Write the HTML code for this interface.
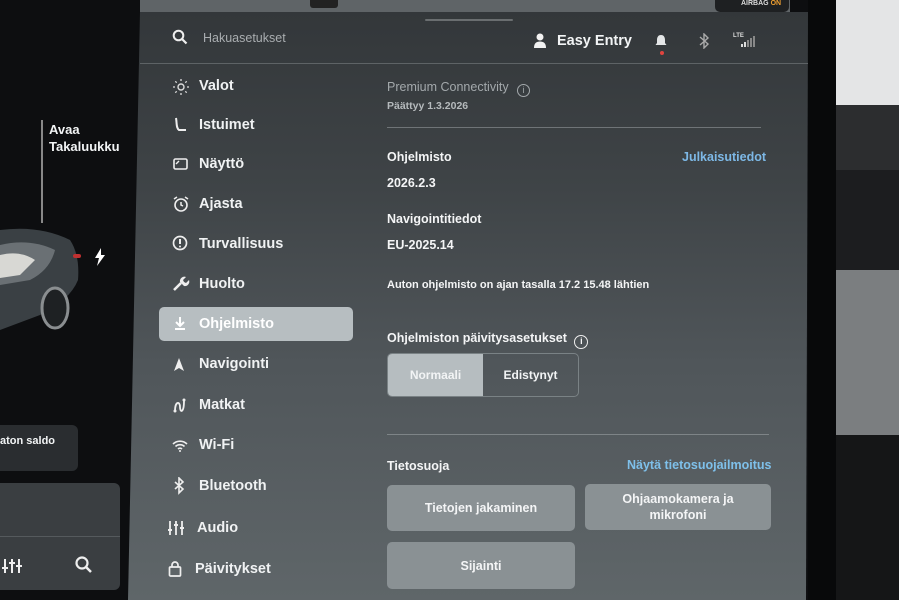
<!DOCTYPE html>
<html><head><meta charset="utf-8"><style>
*{margin:0;padding:0;box-sizing:border-box}
body{width:899px;height:600px;overflow:hidden;background:#0d0e10;font-family:"Liberation Sans",sans-serif;position:relative;color:#f2f4f5}
.a{position:absolute}
.b{font-weight:bold}
.panel{left:128px;top:12px;width:682px;height:588px;background:linear-gradient(180deg,#33373a 0%,#3f4447 30%,#50565a 60%,#5f6669 100%);clip-path:polygon(12px 0,680px 0,678px 100%,0 100%)}
.mi{position:absolute;left:199px;font-size:14.5px;font-weight:bold;color:#f0f2f3}
.ic{position:absolute;left:172px;width:18px;height:18px}
.t{position:absolute;left:387px;font-size:12.5px;font-weight:bold;color:#f4f5f6}
.btn{position:absolute;background:#8a9194;border-radius:5px;color:#f4f5f6;font-weight:bold;font-size:12.5px;display:flex;align-items:center;justify-content:center;text-align:center;line-height:16px}
</style></head><body>
<div class="a" style="left:833px;top:0;width:66px;height:105px;background:#e4e5e6"></div>
<div class="a" style="left:833px;top:105px;width:66px;height:65px;background:#2c2d2f"></div>
<div class="a" style="left:833px;top:170px;width:66px;height:100px;background:#1c1d1f"></div>
<div class="a" style="left:833px;top:270px;width:66px;height:165px;background:#7b7e80"></div>
<div class="a" style="left:833px;top:435px;width:66px;height:165px;background:#151617"></div>
<div class="a" style="left:808px;top:0;width:28px;height:600px;background:#08090a"></div>
<div class="a" style="left:140px;top:0;width:650px;height:12px;background:#5f6467"></div>
<div class="a" style="left:310px;top:0;width:28px;height:8px;background:#222;border-radius:0 0 3px 3px"></div>
<div class="a" style="left:715px;top:0;width:74px;height:12px;background:#1e2022;border-radius:0 0 5px 5px;font-size:7px;color:#ddd;padding-left:26px;font-weight:bold">AIRBAG <span style="color:#f0a030">ON</span></div>
<div class="a panel"></div>
<div class="a" style="left:140px;top:63px;width:668px;height:1px;background:#5e6366"></div>
<div class="a" style="left:425px;top:19px;width:88px;height:2px;background:#6a6e70;border-radius:1px"></div>
<svg class="a" style="left:172px;top:29px" width="16" height="16" viewBox="0 0 16 16"><circle cx="6.5" cy="6.5" r="4.8" fill="none" stroke="#eee" stroke-width="2"/><path d="M10 10l4.5 4.5" stroke="#eee" stroke-width="2.2"/></svg>
<div class="a" style="left:203px;top:31px;font-size:12.5px;color:#a9adb0">Hakuasetukset</div>
<svg class="a" style="left:533px;top:33px" width="14" height="15" viewBox="0 0 14 15"><circle cx="7" cy="4" r="3.5" fill="#f2f2f2"/><path d="M1 15c0-5 2.5-6.5 6-6.5s6 1.5 6 6.5z" fill="#f2f2f2"/></svg>
<div class="a b" style="left:557px;top:33px;font-size:14.5px">Easy Entry</div>
<svg class="a" style="left:655px;top:34px" width="12" height="14" viewBox="0 0 12 14"><path d="M6 1c-3 0-4 2.5-4 5v3l-1.5 2h11L10 9V6c0-2.5-1-5-4-5z" fill="#e4e6e7"/></svg>
<div class="a" style="left:660px;top:51px;width:4px;height:4px;border-radius:50%;background:#e0443e"></div>
<svg class="a" style="left:698px;top:33px" width="12" height="16" viewBox="0 0 12 16"><path d="M2 4l8 7-4 4V1l4 4-8 7" stroke="#aaa" stroke-width="1.4" fill="none"/></svg>
<div class="a" style="left:733px;top:33px;font-size:6px;color:#ddd;font-weight:bold">LTE</div>
<svg class="a" style="left:741px;top:36px" width="14" height="11" viewBox="0 0 14 11"><rect x="0" y="8" width="2" height="3" fill="#ddd"/><rect x="3" y="6" width="2" height="5" fill="#ddd"/><rect x="6" y="4" width="2" height="7" fill="#888"/><rect x="9" y="2" width="2" height="9" fill="#888"/><rect x="12" y="0" width="2" height="11" fill="#888"/></svg>
<div class="a" style="left:159px;top:307px;width:194px;height:34px;background:#b7bec1;border-radius:5px"></div>
<svg class="ic" style="top:78px" viewBox="0 0 18 18"><circle cx="9" cy="9" r="3" fill="none" stroke="#ddd" stroke-width="1.4"/><path d="M9 1v2M9 15v2M1 9h2M15 9h2M3.3 3.3l1.4 1.4M13.3 13.3l1.4 1.4M3.3 14.7l1.4-1.4M13.3 4.7l1.4-1.4" stroke="#ddd" stroke-width="1.3"/></svg><div class="mi" style="top:78px">Valot</div>
<svg class="ic" style="top:116px" viewBox="0 0 18 18"><path d="M4 2c1 5 0 10 3 12h7" fill="none" stroke="#eee" stroke-width="2"/></svg><div class="mi" style="top:117px">Istuimet</div>
<svg class="ic" style="top:156px" viewBox="0 0 18 18"><rect x="2" y="3" width="13" height="10" rx="1.5" fill="none" stroke="#eee" stroke-width="1.6"/><path d="M4 8l3-3" stroke="#eee" stroke-width="1.4"/></svg><div class="mi" style="top:156px">Näyttö</div>
<svg class="ic" style="top:195px" viewBox="0 0 18 18"><circle cx="9" cy="10" r="6" fill="none" stroke="#eee" stroke-width="1.6"/><path d="M9 7v3l2 1M2 4l3-2M16 4l-3-2" stroke="#eee" stroke-width="1.5" fill="none"/></svg><div class="mi" style="top:196px">Ajasta</div>
<svg class="ic" style="top:235px" viewBox="0 0 18 18"><circle cx="8" cy="8" r="6.5" fill="none" stroke="#eee" stroke-width="1.7"/><path d="M8 4v5" stroke="#eee" stroke-width="2"/><circle cx="8" cy="11.5" r="1" fill="#eee"/></svg><div class="mi" style="top:236px">Turvallisuus</div>
<svg class="ic" style="top:275px" viewBox="0 0 18 18"><path d="M2 15l7-7" stroke="#eee" stroke-width="2.6"/><path d="M8 7a4.5 4.5 0 0 1 6-5l-3 3 1 2 2 1 3-3a4.5 4.5 0 0 1-5 6z" fill="#eee"/></svg><div class="mi" style="top:276px">Huolto</div>
<svg class="ic" style="top:315px" viewBox="0 0 18 18"><path d="M8 2v8M4 7l4 4 4-4M3 14h10" stroke="#fff" stroke-width="2" fill="none"/></svg><div class="mi" style="top:316px;color:#fff">Ohjelmisto</div>
<svg class="ic" style="top:356px" viewBox="0 0 18 18"><path d="M7 2l5 13-5-3-5 3z" fill="#eee"/></svg><div class="mi" style="top:356px">Navigointi</div>
<svg class="ic" style="top:396px" viewBox="0 0 18 18"><path d="M3 15c0-10 5-10 5-4s4 6 4-6" stroke="#eee" stroke-width="1.8" fill="none"/><circle cx="3" cy="15" r="1.5" fill="#eee"/><circle cx="12" cy="4" r="1.5" fill="#eee"/></svg><div class="mi" style="top:397px">Matkat</div>
<svg class="ic" style="top:437px" viewBox="0 0 18 18"><path d="M1 7a10 10 0 0 1 14 0M3.5 9.5a6.5 6.5 0 0 1 9 0M6 12a3 3 0 0 1 4 0" stroke="#eee" stroke-width="1.6" fill="none"/><circle cx="8" cy="14" r="1" fill="#eee"/></svg><div class="mi" style="top:437px">Wi-Fi</div>
<svg class="ic" style="top:477px" viewBox="0 0 18 18"><path d="M3 5l8 7-4 4V1l4 4-8 7" stroke="#eee" stroke-width="1.6" fill="none"/></svg><div class="mi" style="top:478px">Bluetooth</div>
<svg class="ic" style="top:519px;left:168px" viewBox="0 0 18 18"><path d="M2 2v14M8 2v14M14 2v14" stroke="#eee" stroke-width="1.8"/><path d="M0 11h4M6 6h4M12 9h4" stroke="#eee" stroke-width="2"/></svg><div class="mi" style="top:520px;left:197px">Audio</div>
<svg class="ic" style="top:560px;left:168px" viewBox="0 0 18 18"><rect x="1.5" y="7" width="11" height="9" rx="1" fill="none" stroke="#eee" stroke-width="1.7"/><path d="M4 7V5a3 3 0 0 1 6 0v2" stroke="#eee" stroke-width="1.7" fill="none"/></svg><div class="mi" style="top:561px;left:195px">Päivitykset</div>
<div class="a" style="left:387px;top:80px;font-size:12.5px;color:#a3a8ab">Premium Connectivity <span style="display:inline-block;width:13px;height:13px;border:1.3px solid #a3a8ab;border-radius:50%;font-size:9px;text-align:center;line-height:11px;margin-left:5px;vertical-align:-2px">i</span></div>
<div class="a" style="left:387px;top:100px;font-size:10.5px;color:#b5babc;font-weight:bold">Päättyy 1.3.2026</div>
<div class="a" style="left:387px;top:127px;width:374px;height:1px;background:#6f7477"></div>
<div class="t" style="top:150px">Ohjelmisto</div>
<div class="a b" style="left:682px;top:150px;font-size:12.5px;color:#7db8e6">Julkaisutiedot</div>
<div class="t" style="top:176px">2026.2.3</div>
<div class="t" style="top:212px">Navigointitiedot</div>
<div class="t" style="top:238px">EU-2025.14</div>
<div class="t" style="top:279px;font-size:11px">Auton ohjelmisto on ajan tasalla 17.2 15.48 lähtien</div>
<div class="t" style="top:331px">Ohjelmiston päivitysasetukset <span style="display:inline-block;width:14px;height:14px;border:1.5px solid #eee;border-radius:50%;font-size:9px;text-align:center;line-height:11px;margin-left:4px;vertical-align:-2px">i</span></div>
<div class="a" style="left:387px;top:353px;width:192px;height:44px;border:1px solid #7a8285;border-radius:5px"></div>
<div class="a b" style="left:388px;top:354px;width:95px;height:42px;background:#b6bdc0;border-radius:4px 0 0 4px;font-size:12px;display:flex;align-items:center;justify-content:center">Normaali</div>
<div class="a b" style="left:483px;top:354px;width:95px;height:42px;font-size:12px;display:flex;align-items:center;justify-content:center">Edistynyt</div>
<div class="a" style="left:387px;top:434px;width:382px;height:1px;background:#7e8487"></div>
<div class="t" style="top:459px">Tietosuoja</div>
<div class="a b" style="left:627px;top:458px;font-size:12.5px;color:#7ec0ea">Näytä tietosuojailmoitus</div>
<div class="btn" style="left:387px;top:485px;width:188px;height:46px">Tietojen jakaminen</div>
<div class="btn" style="left:585px;top:484px;width:186px;height:46px">Ohjaamokamera ja<br>mikrofoni</div>
<div class="btn" style="left:387px;top:542px;width:188px;height:47px">Sijainti</div>
<div class="a" style="left:41px;top:120px;width:2px;height:103px;background:#888"></div>
<div class="a b" style="left:49px;top:121px;font-size:13px;line-height:17px">Avaa<br>Takaluukku</div>
<svg class="a" style="left:0;top:220px" width="90" height="115" viewBox="0 0 90 115"><path d="M0 10 Q40 5 70 20 Q80 35 78 60 Q70 80 40 95 L0 110z" fill="#3a4044"/><path d="M0 25 Q30 18 55 30 Q50 50 30 60 L0 65z" fill="#6a7074"/><path d="M0 35 Q20 30 35 40 L20 55 L0 58z" fill="#d8d8d4"/><ellipse cx="55" cy="88" rx="13" ry="20" fill="#1e2123" stroke="#8a8e90" stroke-width="3"/></svg>
<div class="a" style="left:73px;top:254px;width:8px;height:4px;background:#c03030;border-radius:2px"></div>
<svg class="a" style="left:94px;top:248px" width="12" height="18" viewBox="0 0 12 18"><path d="M7 0L1 10h4l-2 8 8-11H7z" fill="#fff"/></svg>
<div class="a" style="left:0;top:425px;width:78px;height:46px;background:#2a2d30;border-radius:0 6px 6px 0"></div>
<div class="a b" style="left:0;top:435px;font-size:11px">aton saldo</div>
<div class="a" style="left:0;top:483px;width:120px;height:107px;background:#3a3e41;border-radius:0 6px 6px 0"></div>
<div class="a" style="left:0;top:536px;width:120px;height:1px;background:#555a5d"></div>
<svg class="a" style="left:2px;top:557px" width="22" height="18" viewBox="0 0 22 18"><path d="M3 2v14M10 2v14M17 2v14" stroke="#eee" stroke-width="2"/><path d="M0 11h6M7 6h6M14 9h6" stroke="#eee" stroke-width="2"/></svg>
<svg class="a" style="left:74px;top:555px" width="20" height="20" viewBox="0 0 20 20"><circle cx="8" cy="8" r="5.5" fill="none" stroke="#eee" stroke-width="2.2"/><path d="M12 12l5 5" stroke="#eee" stroke-width="2.5"/></svg>
</body></html>
